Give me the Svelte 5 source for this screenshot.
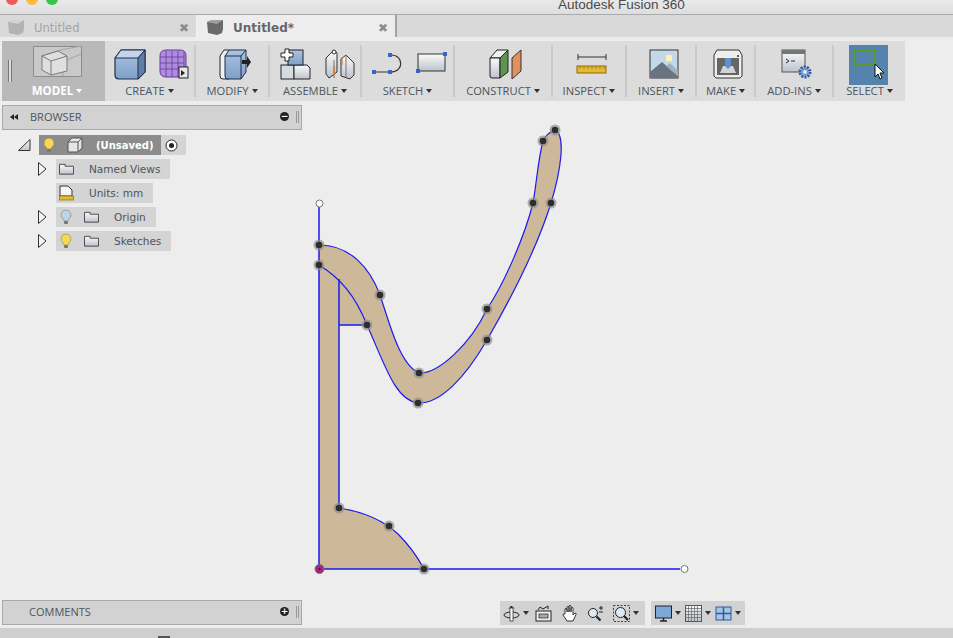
<script lang="ts">
	// Fusion 360 window: chrome is flowed, the sketch is a free canvas
	const groups = [
		{ label: 'CREATE', width: 91, icon: create },
		{ label: 'MODIFY', width: 74, icon: modify },
		{ label: 'ASSEMBLE', width: 92, icon: assemble },
		{ label: 'SKETCH', width: 93, icon: sketch },
		{ label: 'CONSTRUCT', width: 98, icon: construct },
		{ label: 'INSPECT', width: 74, icon: inspect },
		{ label: 'INSERT', width: 70, icon: insert },
		{ label: 'MAKE', width: 59, icon: make },
		{ label: 'ADD-INS', width: 78, icon: addins }
	];

	// outer edge of the profile, up to where the triangle closes it
	const toTriangle =
		'M319 245C350 245 370 268 380 295C390 325 400 365 419 373C438 374 470 345 487 309C505 282 525 235 533 203C537 180 538 160 543 141C545 136 550 132 555 130C566 135 561 170 551 203C538 245 510 300 487 340C465 378 440 404 418 403C395 400 385 365 367 325';
	const outline = `${toTriangle}C355 295 340 278 319 265`;
	const arc = 'C365 512 385 522 398 534C408 544 417 556 424 569';

	const points = [
		[319, 245], [319, 265], [380, 295], [367, 325], [419, 373], [418, 403], [487, 309],
		[487, 340], [533, 203], [551, 203], [543, 141], [555, 130], [339, 508], [389, 526], [424, 569]
	];
</script>

{#snippet bulb(color: string)}
	<svg class="ic14" viewBox="0 0 14 16">
		<path d="M7 1a5 5 0 0 0-3 9l1 2h4l1-2a5 5 0 0 0-3-9z" fill={color} stroke="#8d8d70" stroke-width=".7" />
		<rect x="5" y="12" width="4" height="3" rx="1" fill="#777" />
	</svg>
{/snippet}

{#snippet folder()}
	<svg class="folder" viewBox="0 0 16 12">
		<path d="M.5 11.500V1h6v2h9v8.500z" fill="url(#paper)" stroke="#444" />
	</svg>
{/snippet}

{#snippet caret()}
	<span class="caret"></span>
{/snippet}

{#snippet tabCube(light: boolean)}
	<svg class="tabcube" viewBox="0 0 16 15">
		<path d="M0 2l5-2h11v9l-1 4-5 2-9-2z" fill={light ? '#b3b3b3' : '#6a6a6a'} />
		<path d="M0 2l10 2 6-4H5z" fill={light ? '#d2d2d2' : '#a0a0a0'} />
	</svg>
{/snippet}

{#snippet create()}
	<svg class="tool" width="32" height="32" viewBox="0 0 32 32">
		<path d="M1 10l6-8h24v22l-7 7H5q-4 0-4-4z" fill="url(#blue)" stroke="#1f2e4a" stroke-width="1.200" />
		<path d="M1 10l6-8h24l-7 8z" fill="#c3d5ea" stroke="#1f2e4a" />
		<path d="M24 10v21l7-7V2z" fill="#5d7ea8" stroke="#1f2e4a" />
	</svg>
	<svg class="tool" width="32" height="32" viewBox="0 0 32 32">
		<path d="M2 8q0-6 6-6h14q6 0 6 6v16q0 5-6 5H8q-6 0-6-6z" fill="#b08ae0" stroke="#5f3f96" />
		<path d="M2 9h24M2 15h24M2 21h24M8 3v26M14 3v26M20 3v26M26 3v24" stroke="#5f3f96" fill="none" stroke-width=".8" />
		<rect x="21" y="19" width="9" height="11" fill="#e8e8e8" stroke="#222" />
		<path d="M23 22l4 3-4 3z" fill="#222" />
	</svg>
{/snippet}

{#snippet modify()}
	<svg class="tool" width="32" height="32" viewBox="0 0 32 32">
		<path d="M1 8l4-6h5v29H4q-3 0-3-3z" fill="#eef0f3" stroke="#222" />
		<path d="M6 8l4-6h17v22l-5 7H9q-3 0-3-3z" fill="url(#blue)" stroke="#1f2e4a" />
		<path d="M22 8v23M6 8h16l5-6" stroke="#1f2e4a" fill="none" />
		<path d="M23 12h5V8l4 6-4 6v-4h-5z" fill="#222" />
	</svg>
{/snippet}

{#snippet assemble()}
	<svg class="tool" width="32" height="32" viewBox="0 0 32 32">
		<rect x="1" y="17" width="13" height="14" fill="#d6dbe0" stroke="#222" />
		<path d="M14 17h13l3 3v11H14z" fill="url(#paper)" stroke="#222" />
		<rect x="8" y="2" width="15" height="15" fill="url(#blue)" stroke="#222" />
		<path d="M5 1h4v4h4v4H9v4H5V9H1V5h4z" fill="#fff" stroke="#222" />
	</svg>
	<svg class="tool" width="32" height="32" viewBox="0 0 32 32">
		<path d="M2 10l8-8 3 3v19l-8 6-3-4z" fill="url(#paper)" stroke="#333" />
		<circle cx="10" cy="4" r="2" fill="#fff" stroke="#333" />
		<path d="M17 11l5-4 8 8v12l-4 4-9-3z" fill="url(#paper)" stroke="#333" />
		<path d="M22 7v22M10 12v18" stroke="#777" fill="none" />
		<path d="M18 9v8M10 18v10" stroke="#e8761e" stroke-width="1.300" fill="none" />
	</svg>
{/snippet}

{#snippet sketch()}
	<svg class="tool" width="32" height="32" viewBox="0 0 32 32">
		<path d="M3 24h16c13 0 13-17 0-17" fill="none" stroke="#333" stroke-width="1.200" />
		<g fill="#3366cc"><rect x="0" y="22" width="4" height="4" /><rect x="16" y="22" width="4" height="4" /><rect x="16" y="5" width="4" height="4" /></g>
	</svg>
	<svg class="tool" width="32" height="32" viewBox="0 0 32 32">
		<rect x="2" y="6" width="27" height="17" fill="url(#paper)" stroke="#333" />
		<g fill="#3366cc"><rect x="0" y="21" width="4" height="4" /><rect x="27" y="4" width="4" height="4" /></g>
	</svg>
{/snippet}

{#snippet construct()}
	<svg class="tool" width="20" height="32" viewBox="0 0 20 32">
		<path d="M1 10l7-8h11l-8 8z" fill="#eef0f0" stroke="#222" />
		<path d="M1 10h10v20H3q-2 0-2-2z" fill="url(#paper)" stroke="#222" />
		<path d="M11 10l8-8v22l-8 6z" fill="#5f9351" stroke="#222" />
	</svg>
	<svg class="wedge" width="11" height="32" viewBox="0 0 11 32">
		<path d="M1 10l9-8v21l-9 8z" fill="#e0915f" stroke="#333" />
	</svg>
{/snippet}

{#snippet inspect()}
	<svg class="tool" width="32" height="32" viewBox="0 0 32 32">
		<path d="M2 9h28M2 6v6M30 6v6" stroke="#333" fill="none" />
		<rect x="1" y="18" width="29" height="7" fill="#e6b92f" stroke="#8a6d12" />
		<path d="M4 18v3M8 18v3M12 18v3M16 18v3M20 18v3M24 18v3M28 18v3" stroke="#8a6d12" stroke-width=".7" />
	</svg>
{/snippet}

{#snippet insert()}
	<svg class="tool" width="32" height="32" viewBox="0 0 32 32">
		<rect x="2" y="2" width="28" height="28" fill="#c4d8e8" stroke="#333" />
		<rect x="18" y="7" width="6" height="6" fill="#fff2b0" />
		<path d="M2 30V24l12-10 16 14v2z" fill="#6a7480" />
		<path d="M18 18l4-3 8 8v5z" fill="#9fb0c0" />
	</svg>
{/snippet}

{#snippet make()}
	<svg class="tool" width="32" height="32" viewBox="0 0 32 32">
		<path d="M2 7l3-5h22l3 5v21l-2 2H4l-2-2z" fill="#eee" stroke="#333" />
		<rect x="5" y="10" width="22" height="17" fill="#666" />
		<path d="M8 25l3-7h10l3 7z" fill="#d2d2d2" />
		<path d="M13 10h6v8l-3 3-3-3z" fill="#5f8fcf" />
		<rect x="25" y="7" width="2" height="2" fill="#2e7d32" />
	</svg>
{/snippet}

{#snippet addins()}
	<svg class="tool" width="32" height="32" viewBox="0 0 32 32">
		<rect x="1" y="2" width="23" height="22" fill="url(#paper)" stroke="#555" />
		<rect x="1" y="2" width="23" height="4" fill="#777" />
		<path d="M5 11l3 2-3 2M10 13h4" stroke="#333" fill="none" />
		<circle cx="24" cy="24" r="5" fill="#a9c3e8" stroke="#2f5b9e" stroke-width="3" stroke-dasharray="2 1.100" />
		<circle cx="24" cy="24" r="2.500" fill="#e9eff8" stroke="#2f5b9e" stroke-width=".7" />
	</svg>
{/snippet}

<svg class="defs" width="0" height="0">
	<defs>
		<linearGradient id="blue" x1="0" y1="0" x2="0" y2="1">
			<stop offset="0" stop-color="#aac4e2" />
			<stop offset="1" stop-color="#7f9fc6" />
		</linearGradient>
		<linearGradient id="paper" x1="0" y1="0" x2="0" y2="1">
			<stop offset="0" stop-color="#fbfbfb" />
			<stop offset="1" stop-color="#bcc2cc" />
		</linearGradient>
	</defs>
</svg>

<div class="window">
	<header class="titlebar">
		<div class="lights">
			<span class="light red"></span>
			<span class="light amber"></span>
			<span class="light green"></span>
		</div>
		<span class="title">Autodesk Fusion 360</span>
	</header>

	<nav class="tabs">
		<div class="tab">
			{@render tabCube(true)}
			<span>Untitled</span>
			<span class="close">✖</span>
		</div>
		<div class="tab active">
			{@render tabCube(false)}
			<span>Untitled*</span>
			<span class="close">✖</span>
		</div>
	</nav>

	<div class="toolbar">
		<div class="model">
			<span class="grip"></span>
			<div class="model-main">
				<svg width="49" height="32" viewBox="0 0 49 32">
					<path d="M.5.500h48v30H.500z" fill="#c9c9c9" stroke="#8c8c8c" />
					<path d="M8 10l20-6 20-4M30 8v22M34 14l14-6" fill="none" stroke="#a4a4a4" />
					<path d="M9 10l16-5 9 5v15l-16 4-9-5z" fill="#dfdfdf" stroke="#7b7b7b" />
					<path d="M9 10l9 5 16-5M18 15v14" fill="none" stroke="#7b7b7b" />
				</svg>
				<span class="model-label">MODEL<span class="caret white"></span></span>
			</div>
		</div>
		{#each groups as g (g.label)}
			<div class="group" style:width="{g.width}px">
				<div class="icons">{@render g.icon()}</div>
				<span class="label">{g.label}{@render caret()}</span>
			</div>
		{/each}
		<div class="group last">
			<div class="select-tile">
				<span class="select-box"></span>
				<svg class="cursor" width="12" height="17" viewBox="0 0 12 17">
					<path d="M1 1v13l3-3 2 5 2-1-2-5h4z" fill="#fff" stroke="#111" />
				</svg>
			</div>
			<span class="label select-label">SELECT{@render caret()}</span>
		</div>
	</div>

	<main class="main">
		<svg class="canvas" width="953" height="527" viewBox="0 101 953 527">
			<path d="{toTriangle}L339 325V508{arc}H319V245Z" fill="#cdb999" />
			<g fill="none" stroke="#1a1aee" stroke-width="1.200">
				<path d="M319 207V569H680" stroke-width="1.500" />
				<path d="M339 279V508M339 325H367" stroke-width="1.500" />
				<path d={outline} />
				<path d="M339 508{arc}" />
			</g>
			{#each points as [x, y] (`${x}-${y}`)}
				<circle cx={x} cy={y} r="5.500" fill="#8f8f8f" opacity=".7" />
				<circle cx={x} cy={y} r="3.300" fill="#2d2d2d" />
			{/each}
			<circle cx="319.500" cy="203.500" r="3.500" fill="#fff" stroke="#777" />
			<circle cx="684.500" cy="569" r="3.500" fill="#fff" stroke="#777" />
			<circle cx="319.500" cy="569" r="4.500" fill="#a3237f" stroke="#777" />
			<circle cx="319.500" cy="569" r="1" fill="#222" />
		</svg>

		<aside class="panels">
			<section class="browser">
				<div class="panel-head">
					<svg class="rewind" width="8" height="6" viewBox="0 0 8 6"><path d="M4 0v6L0 3zM8 0v6L4 3z" fill="#222" /></svg>
					<span class="panel-title">BROWSER</span>
					<span class="round">−</span>
					<span class="panel-grip"></span>
				</div>
				<div class="tree">
					<div class="row root">
						<svg class="expand" width="13" height="12" viewBox="0 0 13 12"><path d="M.5 11.500L12 .5v11z" fill="url(#paper)" stroke="#333" /></svg>
						<div class="chip root-chip">
							<div class="root-dark">
								{@render bulb('#f5d94f')}
								<svg class="ic14 rootcube" viewBox="0 0 16 16"><path d="M1 5l4-4h10v10l-4 4H1z" fill="#e6e6e6" stroke="#555" /><path d="M1 5h10l4-4M11 5v10" fill="none" stroke="#555" /></svg>
								<span class="root-name">(Unsaved)</span>
							</div>
							<svg class="radio" width="13" height="13" viewBox="0 0 13 13"><circle cx="6.500" cy="6.500" r="5.500" fill="#fff" stroke="#222" /><circle cx="6.500" cy="6.500" r="2.500" fill="#222" /></svg>
						</div>
					</div>
					<div class="row">
						<svg class="arrow" width="9" height="14" viewBox="0 0 9 14"><path d="M.5.5L8 7 .5 13.500z" fill="#f4f4f4" stroke="#333" /></svg>
						<div class="chip">
							{@render folder()}
							<span class="name">Named Views</span>
						</div>
					</div>
					<div class="row">
						<span class="arrow-gap"></span>
						<div class="chip">
							<svg class="folder doc" viewBox="0 0 15 16"><path d="M1 11V1h8l4 4v6z" fill="#f6f6f6" stroke="#333" /><rect x=".5" y="11" width="14" height="4" fill="#e6b92f" stroke="#8a6d12" stroke-width=".7" /></svg>
							<span class="name">Units: mm</span>
						</div>
					</div>
					<div class="row">
						<svg class="arrow" width="9" height="14" viewBox="0 0 9 14"><path d="M.5.5L8 7 .5 13.500z" fill="#f4f4f4" stroke="#333" /></svg>
						<div class="chip">
							{@render bulb('#b9d4ef')}
							{@render folder()}
							<span class="name">Origin</span>
						</div>
					</div>
					<div class="row">
						<svg class="arrow" width="9" height="14" viewBox="0 0 9 14"><path d="M.5.5L8 7 .5 13.500z" fill="#f4f4f4" stroke="#333" /></svg>
						<div class="chip">
							{@render bulb('#f5d94f')}
							{@render folder()}
							<span class="name">Sketches</span>
						</div>
					</div>
				</div>
			</section>

			<section class="panel-head comments">
				<span class="panel-title">COMMENTS</span>
				<span class="round">+</span>
				<span class="panel-grip"></span>
			</section>
		</aside>

		<div class="navbars">
			<div class="navbar first">
				<svg class="nav" viewBox="0 0 17 17"><path d="M8.500 1v15M6 3.500L8.500 1 11 3.500" fill="none" stroke="#222" /><ellipse cx="8.500" cy="10" rx="7.500" ry="3" fill="none" stroke="#222" /><rect x="7" y="3" width="3" height="13" fill="#fff" stroke="#222" stroke-width=".7" /></svg>
				{@render caret()}
				<svg class="nav" viewBox="0 0 17 17"><rect x="1" y="6" width="15" height="10" fill="#eee" stroke="#222" /><rect x="4" y="9" width="9" height="4" fill="#aaa" stroke="#222" stroke-width=".7" /><path d="M3 5l2-3 3 2 5-3v3" fill="none" stroke="#222" /></svg>
				<svg class="nav" viewBox="0 0 17 17"><path d="M4 9V4q1-1.500 2 0v3-5q1-1.500 2 0v5-6q1-1.500 2 0v6-4q1-1.500 2 0v7l2-2q1.500 0 1 1.500L12 16H6L2 10q0-1.500 1.500-1z" fill="#fff" stroke="#222" stroke-width=".9" /></svg>
				<svg class="nav" viewBox="0 0 17 17"><circle cx="6" cy="8" r="4.500" fill="#dfe9f3" stroke="#222" /><path d="M9.500 11.500l4 4" stroke="#222" stroke-width="2.200" /><path d="M12 3h4M14 1v4M12 7h4" stroke="#222" /></svg>
				<svg class="nav" viewBox="0 0 17 17"><path d="M.5.500h16v16H.500z" fill="none" stroke="#444" stroke-dasharray="2 1.500" /><circle cx="7.500" cy="7.500" r="5" fill="#dfe9f3" stroke="#222" /><path d="M11 11l4 4" stroke="#222" stroke-width="2.200" /></svg>
				{@render caret()}
			</div>
			<div class="navbar second">
				<svg class="nav" viewBox="0 0 17 17"><rect x=".5" y="1" width="16" height="12" fill="#7ea8d8" stroke="#222" /><path d="M5 16h7M8.500 13v3" stroke="#222" stroke-width="1.500" /></svg>
				{@render caret()}
				<svg class="nav" viewBox="0 0 17 17"><rect x=".5" y=".5" width="16" height="16" fill="url(#paper)" stroke="#555" /><path d="M3.500 0v17M6.500 0v17M9.500 0v17M12.500 0v17M0 3.500h17M0 6.500h17M0 9.500h17M0 12.500h17" stroke="#666" stroke-width=".7" /></svg>
				{@render caret()}
				<svg class="nav" viewBox="0 0 17 17"><rect x="1" y="2" width="15" height="13" fill="#a9c5e6" stroke="#2f5b9e" /><path d="M8.500 2v13M1 8.500h15" stroke="#2f5b9e" stroke-width="1.500" /></svg>
				{@render caret()}
			</div>
		</div>
	</main>

	<footer class="statusbar"><span class="status-notch"></span></footer>
</div>

<style>
	:global(body) {
		margin: 0;
		background: #ededed;
	}
	.defs {
		position: absolute;
	}
	.window {
		width: 953px;
		height: 638px;
		overflow: hidden;
		display: flex;
		flex-direction: column;
		font-family: 'DejaVu Sans', sans-serif;
		color: #555;
	}
	.titlebar {
		height: 14px;
		flex: none;
		position: relative;
		background: linear-gradient(#e9e9e9, #dedede);
		border-bottom: 1px solid #ababab;
	}
	.lights {
		display: flex;
		gap: 8px;
		padding-left: 6px;
		margin-top: -7px;
	}
	.light {
		width: 12px;
		height: 12px;
		border-radius: 50%;
	}
	.red { background: #f15b55; }
	.amber { background: #fcbb3b; }
	.green { background: #36c748; }
	.title {
		position: absolute;
		left: 558px;
		top: -4px;
		font: 13.500px/18px 'Liberation Sans', sans-serif;
		color: #4a4a4a;
		white-space: nowrap;
	}
	.tabs {
		height: 22px;
		flex: none;
		display: flex;
		background: #d9d9d9;
	}
	.tab {
		width: 197px;
		display: flex;
		align-items: center;
		gap: 10px;
		padding: 3px 7px 0 8px;
		box-sizing: border-box;
		font-size: 11.500px;
		color: #a3a3a3;
		border-right: 1px solid #f2f2f2;
		background: #d9d9d9;
	}
	.tab.active {
		width: 200px;
		padding-left: 10px;
		font-size: 12px;
		color: #666;
		font-weight: 700;
		background: #ededed;
		border-right: 2px solid #a3a3a3;
	}
	.tabcube {
		width: 16px;
		height: 15px;
	}
	.close {
		margin-left: auto;
		font-size: 12px;
		font-weight: 400;
		color: #8c8c8c;
	}
	.toolbar {
		height: 60px;
		width: 903px;
		flex: none;
		margin: 4px 0 0 2px;
		display: flex;
		background: #dcdcdc;
	}
	.model {
		width: 103px;
		flex: none;
		display: flex;
		background: #b9b9b9;
	}
	.grip {
		width: 4px;
		height: 22px;
		margin: 19px 0 0 6px;
		border-left: 1px solid #777;
		border-right: 1px solid #777;
		background: #ddd;
		box-sizing: border-box;
	}
	.model-main {
		flex: 1;
		display: flex;
		flex-direction: column;
		align-items: center;
		padding-top: 5px;
		margin-left: 9px;
		margin-right: 12px;
	}
	.model-label {
		margin-top: 6px;
		font: 700 11.500px/14px 'Open Sans', sans-serif;
		color: #fff;
		white-space: nowrap;
	}
	.group {
		flex: none;
		box-sizing: border-box;
		margin: 4px 0;
		display: flex;
		flex-direction: column;
		align-items: center;
		border-right: 2px solid #c9c9c9;
	}
	.group.last {
		flex: 1;
		border-right: 0;
	}
	.icons {
		flex: none;
		height: 36px;
		box-sizing: border-box;
		padding-top: 3px;
		margin-left: 5px;
		display: flex;
		gap: 12px;
	}
	.wedge {
		margin-left: -10px;
	}
	.label {
		flex: none;
		margin-top: 3px;
		font: 11.200px/14px 'Open Sans', sans-serif;
		color: #4c5560;
		white-space: nowrap;
	}
	.select-label {
		margin-top: -1px;
	}
	.caret {
		display: inline-block;
		width: 0;
		height: 0;
		margin-left: 3px;
		vertical-align: 2px;
		border-left: 3px solid transparent;
		border-right: 3px solid transparent;
		border-top: 4px solid #333;
	}
	.caret.white {
		border-top-color: #fff;
	}
	.select-tile {
		position: relative;
		flex: none;
		width: 39px;
		height: 40px;
		margin-right: 2px;
		background: #5583ae;
	}
	.select-box {
		position: absolute;
		left: 5px;
		top: 5px;
		width: 21px;
		height: 15px;
		box-sizing: border-box;
		border: 1px solid #5d9a2e;
	}
	.cursor {
		position: absolute;
		left: 25px;
		top: 18px;
	}
	.main {
		flex: 1;
		position: relative;
		display: flex;
		min-height: 0;
	}
	.canvas {
		position: absolute;
		left: 0;
		top: 0;
	}
	.panels {
		position: relative;
		width: 300px;
		margin: 4px 0 3px 2px;
		display: flex;
		flex-direction: column;
		justify-content: space-between;
	}
	.panel-head {
		height: 25px;
		box-sizing: border-box;
		display: flex;
		align-items: center;
		padding: 0 2px 2px 7px;
		background: #d2d2d2;
		border: 1px solid #a9a9a9;
		font: 11px 'Open Sans', sans-serif;
		color: #4c5560;
	}
	.rewind {
		margin-right: 12px;
	}
	.comments {
		padding-left: 26px;
	}
	.round {
		width: 9px;
		height: 9px;
		margin-left: auto;
		border-radius: 50%;
		background: #222;
		color: #fff;
		font: 700 9px/9px 'DejaVu Sans', sans-serif;
		text-align: center;
	}
	.panel-grip {
		width: 3px;
		height: 12px;
		margin-left: 7px;
		border-left: 1px solid #999;
		border-right: 1px solid #999;
		box-sizing: border-box;
	}
	.tree {
		padding-top: 5px;
		display: flex;
		flex-direction: column;
		gap: 4px;
	}
	.row {
		display: flex;
		align-items: center;
		height: 20px;
		padding-left: 36px;
	}
	.row.root {
		padding-left: 16px;
	}
	.expand {
		margin-right: 8px;
	}
	.arrow {
		margin-right: 9px;
	}
	.arrow-gap {
		width: 18px;
	}
	.chip {
		height: 20px;
		display: flex;
		align-items: center;
		padding: 0 10px 0 3px;
		background: #d4d4d4;
		font-size: 10.500px;
		color: #4c5560;
	}
	.ic14 {
		width: 14px;
		height: 16px;
		flex: none;
	}
	.folder {
		width: 15px;
		height: 12px;
		flex: none;
	}
	.doc {
		height: 16px;
	}
	.chip .ic14 + .folder {
		margin-left: 11px;
	}
	.name {
		margin-left: 15px;
		white-space: nowrap;
	}
	.root-chip {
		padding: 0;
		width: 147px;
		box-sizing: border-box;
	}
	.root-dark {
		width: 122px;
		height: 20px;
		display: flex;
		align-items: center;
		padding-left: 3px;
		box-sizing: border-box;
		background: #8c8c8c;
	}
	.rootcube {
		margin-left: 11px;
		width: 16px;
	}
	.root-name {
		margin-left: 13px;
		font-size: 10px;
		color: #fff;
		font-weight: 700;
		white-space: nowrap;
	}
	.radio {
		margin-left: 4px;
	}
	.navbars {
		position: absolute;
		left: 500px;
		top: 500px;
		display: flex;
		gap: 6px;
	}
	.navbar {
		height: 24px;
		display: flex;
		align-items: center;
		gap: 9px;
		padding-left: 3px;
		box-sizing: border-box;
		background: #d2d2d2;
	}
	.navbar .caret {
		margin-left: -6px;
		vertical-align: 0;
	}
	.navbar .caret + .nav {
		margin-left: -3px;
	}
	.second .caret + .nav {
		margin-left: -5px;
	}
	.first { width: 145px; }
	.second { width: 94px; padding-left: 4px; }
	.nav {
		width: 17px;
		height: 17px;
		flex: none;
	}
	.statusbar {
		height: 10px;
		flex: none;
		position: relative;
		background: #cfcfcf;
	}
	.status-notch {
		position: absolute;
		left: 158px;
		top: 8px;
		width: 12px;
		height: 2px;
		background: #555;
	}
</style>
